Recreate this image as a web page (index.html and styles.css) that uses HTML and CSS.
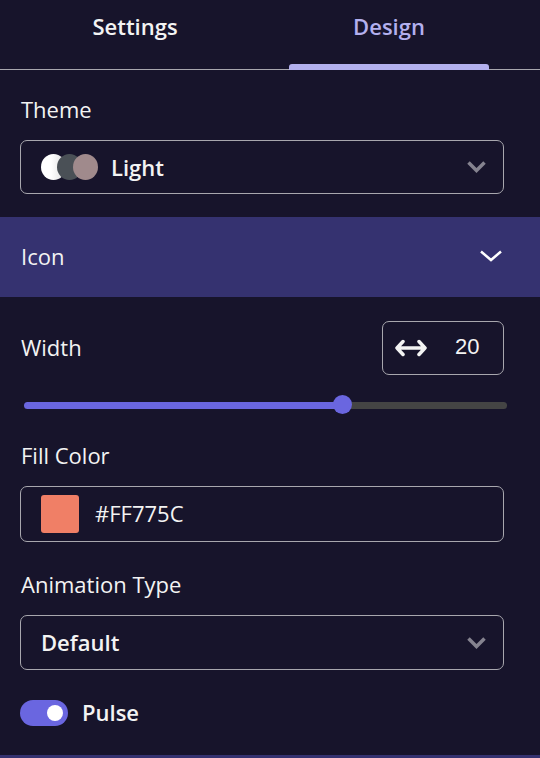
FILE: index.html
```html
<!DOCTYPE html>
<html lang="en">
<head>
    <meta charset="UTF-8">
    <meta name="viewport" content="width=device-width, initial-scale=1.0">
    <title>Design</title>
    <link rel="stylesheet" href="styles.css">
</head>
<body>
    <nav class="tabs">
        <button type="button" class="tab">Settings</button>
        <button type="button" class="tab active">Design</button>
    </nav>

    <div class="section theme">
        <label class="label" for="theme">Theme</label>
        <div class="field">
            <span class="swatches"><i class="white"></i><i class="slate"></i><i class="rose"></i></span>
            <select id="theme">
                <option>Light</option>
            </select>
            <svg class="arrow" width="20" height="14" viewBox="0 0 20 14"><path d="M1.5 2.5L9.5 10.5L17.5 2.5"/></svg>
        </div>
    </div>

    <button type="button" class="bar">
        <span>Icon</span>
        <svg width="24" height="14" viewBox="0 0 24 14"><path d="M2 2.5L12 11L22 2.5"/></svg>
    </button>

    <div class="section icon">
        <div class="row">
            <label class="label" for="width">Width</label>
            <div class="field size">
                <svg width="32" height="18" viewBox="0 0 32 18"><path d="M2 9H30M8 2.5L2 9L8 15.5M24 2.5L30 9L24 15.5"/></svg>
                <input type="text" id="width" inputmode="numeric" value="20">
            </div>
        </div>
        <input type="range" class="slider" aria-label="Width" min="0" max="30" value="20" style="--fill: 66%">

        <label class="label" for="fill">Fill Color</label>
        <div class="field color">
            <span class="chip"></span>
            <input type="text" id="fill" value="#FF775C">
        </div>

        <label class="label" for="animation">Animation Type</label>
        <div class="field">
            <select id="animation">
                <option>Default</option>
            </select>
            <svg class="arrow" width="20" height="14" viewBox="0 0 20 14"><path d="M1.5 2.5L9.5 10.5L17.5 2.5"/></svg>
        </div>

        <label class="switch">
            <input type="checkbox" checked>
            <span>Pulse</span>
        </label>
    </div>
</body>
</html>
```
FILE: styles.css
```css
*{
    box-sizing: border-box;
    margin: 0;
    padding: 0;
}
body{
    background-color: #17142b;
    color: #f3f3f3;
    font: 22px/30px "Open Sans", sans-serif;
}
button, input, select{
    font: inherit;
    color: inherit;
    background: none;
    border: none;
    outline: none;
    appearance: none;
}
svg{
    flex: none;
    fill: none;
    stroke: #f3f3f3;
    stroke-width: 3;
}

/* tabs */
.tabs{
    display: flex;
    height: 70px;
    padding: 0 24px 0 8px;
    border-bottom: 1px solid #a8a7ae;
}
.tab{
    flex: 1;
    height: 70px;
    padding-bottom: 18px;
    font-weight: 600;
    position: relative;
}
.active{
    color: #b3b0ee;
}
.active::after{
    content: "";
    position: absolute;
    left: 27px;
    right: 27px;
    bottom: 0;
    height: 6px;
    border-radius: 3px 3px 0 0;
    background-color: #b3b0ee;
}

/* sections */
.section{
    padding: 24px 36px 27px 20px;
}
.label{
    display: block;
    margin-bottom: 15px;
    padding: 0 0 2px 1px;
    line-height: 28px;
}
.field{
    display: flex;
    align-items: center;
    height: 55px;
    margin-bottom: 28px;
    padding: 0 16px 0 20px;
    border: 1px solid #a8a7ae;
    border-radius: 7px;
}
.field select{
    flex: 1;
    margin-bottom: 1px;
    font-weight: 600;
}
.field input{
    flex: 1;
    min-width: 0;
    padding-bottom: 2px;
}
.theme{
    padding-top: 25px;
    padding-bottom: 23px;
}
.theme .field{
    height: 54px;
    margin-bottom: 0;
}
.arrow{
    stroke: #85838f;
    stroke-width: 3.5;
}
.swatches{
    display: flex;
    margin-right: 13px;
}
.swatches i{
    width: 25px;
    height: 26px;
    border-radius: 50%;
}
.swatches i + i{
    margin-left: -9px;
}
.white{
    background: linear-gradient(to right, #fff 40%, #dcdcdc);
}
.slate{
    background-color: #4a5056;
}
.rose{
    background-color: #a08a8c;
}
.bar{
    display: flex;
    align-items: center;
    justify-content: space-between;
    width: 100%;
    height: 80px;
    padding: 0 37px 2px 21px;
    background-color: #353270;
}
.bar svg{
    stroke: #fff;
    stroke-width: 2.5;
}
.icon{
    border-bottom: 3px solid #353270;
}
.row{
    display: flex;
    align-items: center;
    justify-content: space-between;
    margin-bottom: 20px;
}
.row .label{
    margin-bottom: 0;
}
.size{
    width: 122px;
    height: 54px;
    margin-bottom: 0;
    padding: 0 12px;
}
.size svg{
    stroke-width: 3.5;
    stroke-linecap: round;
    stroke-linejoin: round;
}
.size input{
    padding-left: 28px;
    font-family: "Liberation Sans", sans-serif;
}

/* slider */
.slider{
    display: block;
    width: calc(100% - 1px);
    height: 21px;
    margin: 0 0 25px 4px;
}
.slider::-webkit-slider-runnable-track{
    height: 7px;
    border-radius: 4px;
    background: linear-gradient(to right, #6a66e0 var(--fill), #444 var(--fill));
}
.slider::-webkit-slider-thumb{
    appearance: none;
    width: 19px;
    height: 19px;
    margin-top: -7px;
    border-radius: 50%;
    background-color: #6a66e0;
}

.color{
    height: 56px;
}
.chip{
    width: 38px;
    height: 38px;
    margin-right: 16px;
    border-radius: 3px;
    background-color: #f07f66;
}

/* toggle */
.switch{
    display: flex;
    align-items: center;
    font-weight: 600;
}
.switch span{
    padding-bottom: 2px;
    line-height: 28px;
}
.switch input{
    width: 48px;
    height: 26px;
    margin-right: 14px;
    padding: 5px;
    border-radius: 13px;
    background-color: #6a66e0;
}
.switch input::before{
    content: "";
    display: block;
    width: 16px;
    height: 16px;
    border-radius: 50%;
    background-color: #fff;
}
.switch input:checked::before{
    margin-left: auto;
}
```
